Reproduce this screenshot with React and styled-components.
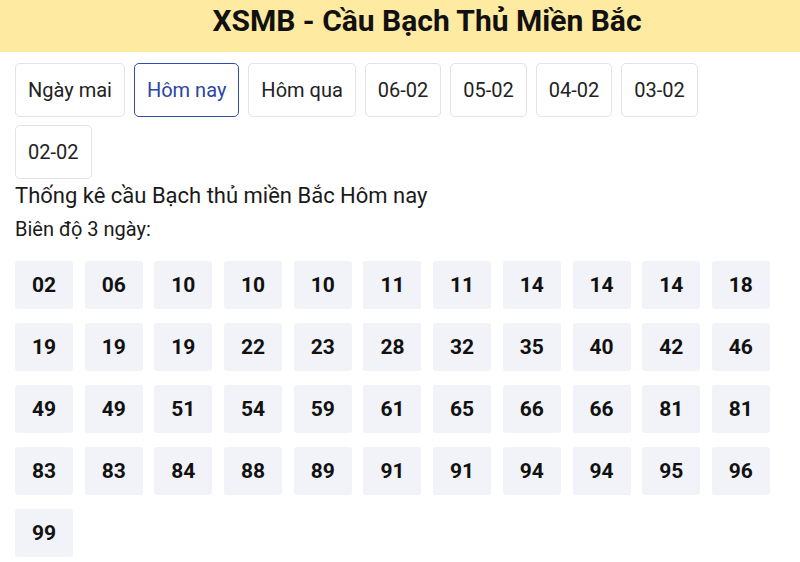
import React from 'react';
import styled, { createGlobalStyle } from 'styled-components';

const GlobalStyle = createGlobalStyle`
  body {
    margin: 0;
    background: #ffffff;
    font-family: 'Roboto', 'Noto Sans', sans-serif;
    color: #111;
  }
`;

const Header = styled.header`
  height: 52px;
  background: #feeaa1;
  box-sizing: border-box;
  padding: 3px 0 0 54px;
  text-align: center;
`;

const Title = styled.h1`
  margin: 0;
  font-size: 30px;
  line-height: 36px;
  font-weight: 700;
  color: #111;
`;

const Body = styled.main`
  padding: 11px 30px 0 15px;
`;

const Tabs = styled.nav`
  display: flex;
  flex-wrap: wrap;
  gap: 8px 9px;
`;

const Tab = styled.button`
  font-family: 'Roboto', sans-serif;
  font-size: 20px;
  line-height: 28px;
  padding: 12px 12px;
  background: #fff;
  color: ${p => (p.$active ? '#2a46a6' : '#222')};
  border: 1px solid ${p => (p.$active ? '#2f4ea8' : '#e3e3e3')};
  border-radius: 5px;
  cursor: pointer;
`;

const Heading = styled.p`
  margin: 2px 0 0;
  font-size: 22px;
  line-height: 30px;
  color: #1a1a1a;
`;

const Sub = styled.p`
  margin: 3px 0 0;
  font-size: 20px;
  line-height: 30px;
  color: #1a1a1a;
`;

const Grid = styled.div`
  margin-top: 17px;
  display: grid;
  grid-template-columns: repeat(11, 58px);
  column-gap: 11.7px;
  row-gap: 14px;
`;

const Cell = styled.div`
  height: 48px;
  display: flex;
  align-items: center;
  justify-content: center;
  background: #f2f3f8;
  border-radius: 3px;
  font-size: 21px;
  font-weight: 700;
  color: #111;
`;

const tabs = ['Ngày mai', 'Hôm nay', 'Hôm qua', '06-02', '05-02', '04-02', '03-02', '02-02'];

const numbers = [
  '02', '06', '10', '10', '10', '11', '11', '14', '14', '14', '18',
  '19', '19', '19', '22', '23', '28', '32', '35', '40', '42', '46',
  '49', '49', '51', '54', '59', '61', '65', '66', '66', '81', '81',
  '83', '83', '84', '88', '89', '91', '91', '94', '94', '95', '96',
  '99',
];

export default function App() {
  return (
    <>
      <GlobalStyle />
      <Header>
        <Title>XSMB - Cầu Bạch Thủ Miền Bắc</Title>
      </Header>
      <Body>
        <Tabs>
          {tabs.map(t => (
            <Tab key={t} $active={t === 'Hôm nay'}>{t}</Tab>
          ))}
        </Tabs>
        <Heading>Thống kê cầu Bạch thủ miền Bắc Hôm nay</Heading>
        <Sub>Biên độ 3 ngày:</Sub>
        <Grid>
          {numbers.map((n, i) => (
            <Cell key={i}>{n}</Cell>
          ))}
        </Grid>
      </Body>
    </>
  );
}
